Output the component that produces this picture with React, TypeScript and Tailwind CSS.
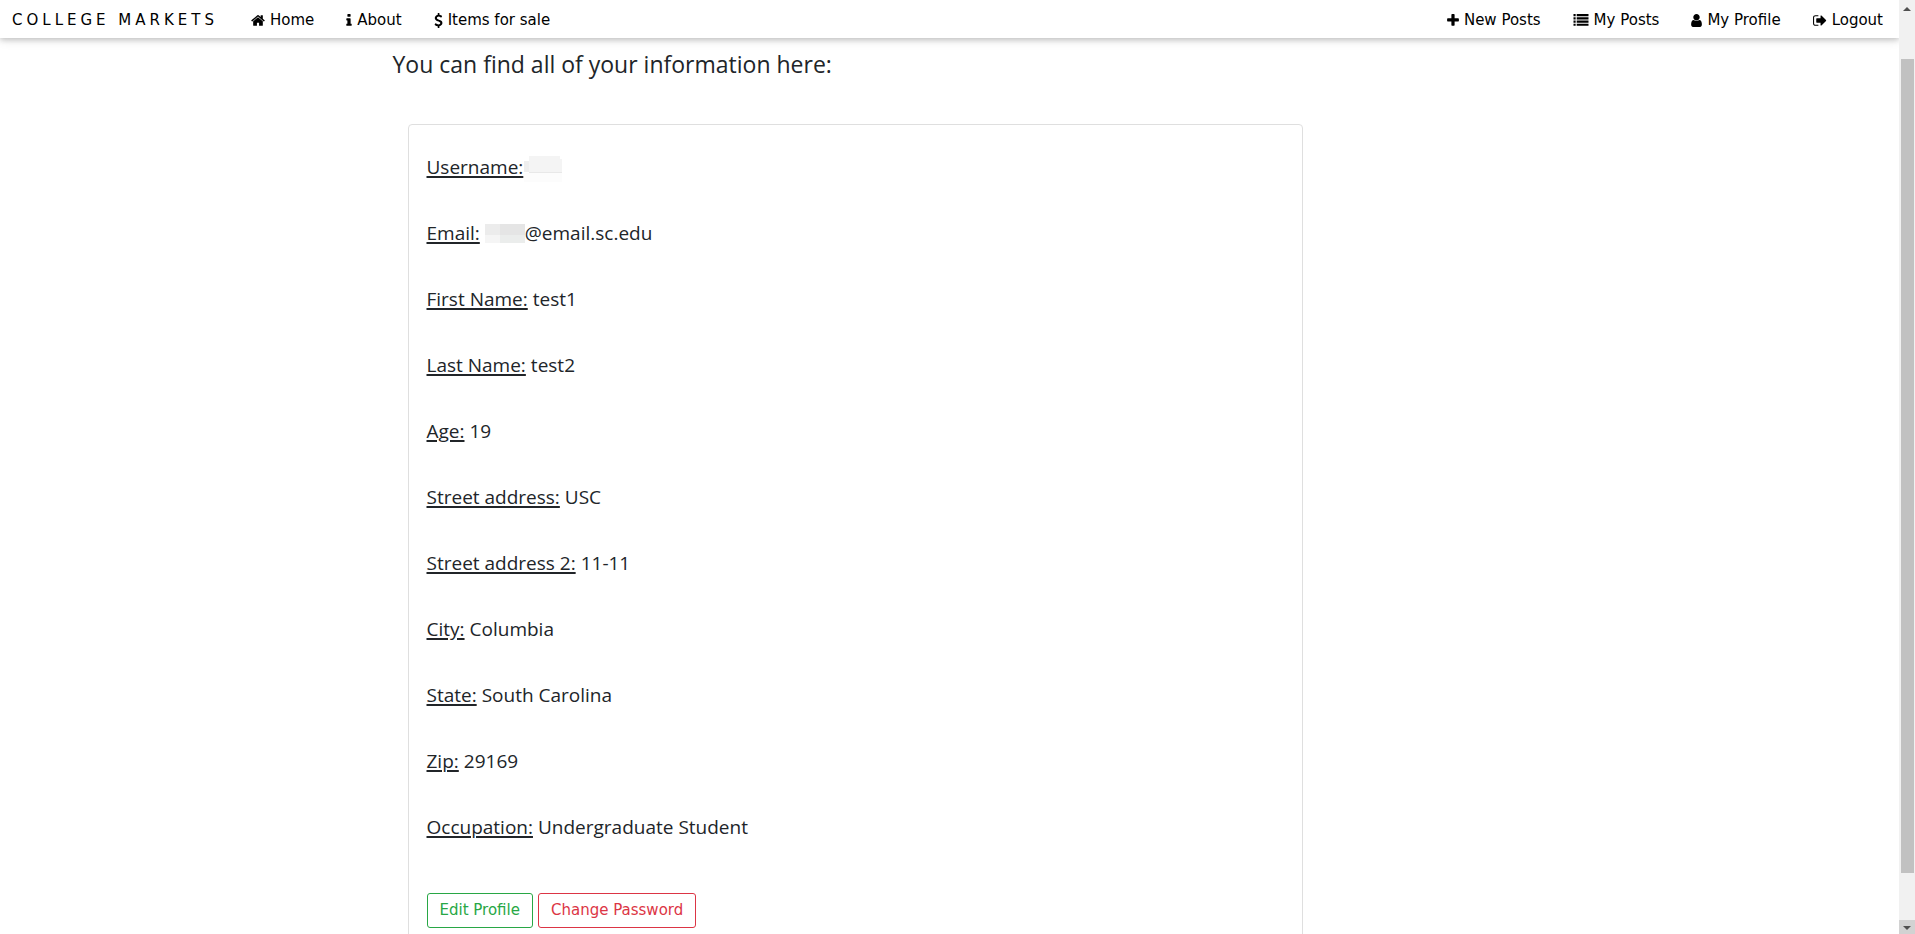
import React from "react";

type IconName = "home" | "info" | "dollar" | "plus" | "list" | "user" | "signOut";

const ICONS: Record<IconName, { viewBox: string; size: string; path: string }> = {
  home: {
    viewBox: "64 0 1664 1792",
    size: "w-[14px]",
    path: "M1472 992v480q0 26-19 45t-45 19h-384v-384h-256v384h-384q-26 0-45-19t-19-45v-480q0-1 .5-3t.5-3l575-474 575 474q1 2 1 6zm223-69l-62 74q-8 9-21 11h-3q-13 0-21-7l-692-577-692 577q-12 8-24 7-13-2-21-11l-62-74q-8-10-7-23.5t11-21.5l719-599q32-26 76-26t76 26l244 204v-195q0-14 9-23t23-9h192q14 0 23 9t9 23v408l219 182q10 8 11 21.5t-7 23.5z",
  },
  info: {
    viewBox: "576 0 640 1792",
    size: "w-[6px]",
    path: "M1216 1344v128q0 26-19 45t-45 19h-512q-26 0-45-19t-19-45v-128q0-26 19-45t45-19h64v-384h-64q-26 0-45-19t-19-45v-128q0-26 19-45t45-19h384q26 0 45 19t19 45v576h64q26 0 45 19t19 45zm-128-1152v192q0 26-19 45t-45 19h-256q-26 0-45-19t-19-45v-192q0-26 19-45t45-19h256q26 0 45 19t19 45z",
  },
  dollar: {
    viewBox: "384 0 1024 1792",
    size: "w-[9px]",
    path: "M1362 1185q0 153-99.5 263.5t-258.5 136.5v175q0 14-9 23t-23 9h-135q-13 0-22.5-9.5t-9.5-22.5v-175q-66-9-127.5-31t-101.5-44.5-74-48-46.5-37.5-17.5-18q-17-21-2-41l103-135q7-10 23-12 15-2 24 9l2 2q113 99 243 125 37 8 74 8 81 0 142.5-43t61.5-122q0-28-15-53t-33.5-42-58.5-37.5-66-32-80-32.5q-39-16-61.5-25t-61.5-26.5-62.5-31-56.5-35.5-53.5-42.5-43.5-49-35.5-58-21-66.5-8.5-78q0-138 98-242t255-134v-180q0-13 9.5-22.5t22.5-9.5h135q14 0 23 9t9 23v176q57 6 110.5 23t87 33.5 63.5 37.5 39 29 15 14q17 18 5 38l-81 146q-8 15-23 16-14 3-27-7-3-3-14.5-12t-39-26.5-58.5-32-74.5-26-85.5-11.5q-95 0-155 43t-60 111q0 26 8.5 48t29.5 41.5 39.5 33 56 31 60.5 27 70 27.5q53 20 81 31.5t76 35 75.5 42.5 62 50 53 63.5 31.5 76.5 13 94z",
  },
  plus: {
    viewBox: "192 0 1408 1792",
    size: "w-[12px]",
    path: "M1600 736v192q0 40-28 68t-68 28h-416v416q0 40-28 68t-68 28h-192q-40 0-68-28t-28-68v-416h-416q-40 0-68-28t-28-68v-192q0-40 28-68t68-28h416v-416q0-40 28-68t68-28h192q40 0 68 28t28 68v416h416q40 0 68 28t28 68z",
  },
  list: {
    viewBox: "0 0 1792 1792",
    size: "w-[16px]",
    path: "M0 128h256v256H0zM384 128h1408v256H384zM0 512h256v256H0zM384 512h1408v256H384zM0 896h256v256H0zM384 896h1408v256H384zM0 1280h256v256H0zM384 1280h1408v256H384z",
  },
  user: {
    viewBox: "256 0 1280 1792",
    size: "w-[11px]",
    path: "M1536 1399q0 109-62.5 187t-150.5 78h-854q-88 0-150.5-78t-62.5-187q0-85 8.5-160.5t31.5-152 58.5-131 94-89 134.5-34.5q131 128 313 128t313-128q76 0 134.5 34.5t94 89 58.5 131 31.5 152 8.5 160.5zm-256-887q0 159-112.5 271.5t-271.5 112.5-271.5-112.5-112.5-271.5 112.5-271.5 271.5-112.5 271.5 112.5 112.5 271.5z",
  },
  signOut: {
    viewBox: "96 0 1600 1792",
    size: "w-[14px]",
    path: "M704 1440q0 4 1 20t.5 26.5-3 23.5-10 19.5-20.5 6.5h-320q-119 0-203.5-84.5t-84.5-203.5v-704q0-119 84.5-203.5t203.5-84.5h320q13 0 22.5 9.5t9.5 22.5q0 4 1 20t.5 26.5-3 23.5-10 19.5-20.5 6.5h-320q-66 0-113 47t-47 113v704q0 66 47 113t113 47h312l11.5 1 11.5 3 8 5.5 7 9 2 13.5zm928-544q0 26-19 45l-544 544q-19 19-45 19t-45-19-19-45v-288h-448q-26 0-45-19t-19-45v-384q0-26 19-45t45-19h448v-288q0-26 19-45t45-19 45 19l544 544q19 19 19 45z",
  },
};

function Icon({ name }: { name: IconName }) {
  const icon = ICONS[name];
  return (
    <svg viewBox={icon.viewBox} className={`h-[15px] shrink-0 ${icon.size}`} fill="currentColor" aria-hidden="true">
      <path d={icon.path} />
    </svg>
  );
}

function NavLink({ icon, label }: { icon: IconName; label: string }) {
  return (
    <a href="#" className="flex items-center gap-[5px] px-4">
      <Icon name={icon} />
      {label}
    </a>
  );
}

const FIELDS: { label: string; value: React.ReactNode }[] = [
  { label: "Username:", value: <UsernameMask /> },
  {
    label: "Email:",
    value: (
      <>
        <EmailMask />
        @email.sc.edu
      </>
    ),
  },
  { label: "First Name:", value: "test1" },
  { label: "Last Name:", value: "test2" },
  { label: "Age:", value: "19" },
  { label: "Street address:", value: "USC" },
  { label: "Street address 2:", value: "11-11" },
  { label: "City:", value: "Columbia" },
  { label: "State:", value: "South Carolina" },
  { label: "Zip:", value: "29169" },
  { label: "Occupation:", value: "Undergraduate Student" },
];

function UsernameMask() {
  return (
    <svg viewBox="0 0 38 30" className="-ml-1 h-[30px] w-[38px]" aria-hidden="true">
      <path d="M0 9h5v11H0z" fill="#eeeeee" />
      <path d="M5 4h31v3h2v13H5z" fill="#f4f4f4" />
      <path d="M5 20h33v1H5z" fill="#e8e8e8" />
      <path d="M0 21h38v9H0z" fill="#fcfcfc" />
    </svg>
  );
}

function EmailMask() {
  return (
    <svg viewBox="0 0 40 19" className="h-[19px] w-[40px]" aria-hidden="true">
      <path d="M0 0h15v11H0z" fill="#ececec" />
      <path d="M15 0h25v11H15z" fill="#e5e5e5" />
      <path d="M0 11h15v8H0z" fill="#f5f5f5" />
      <path d="M15 11h25v8H15z" fill="#ebedec" />
    </svg>
  );
}

function Scrollbar() {
  return (
    <div className="flex w-4 shrink-0 flex-col bg-[#f1f1f1]" aria-hidden="true">
      <svg viewBox="0 0 16 17" className="h-[17px] w-4 shrink-0">
        <path d="M8 7l4 4H4z" fill="#505050" />
      </svg>
      <div className="flex min-h-0 flex-1 flex-col pt-[42px] pr-px pb-[47px] pl-0.5">
        <div className="grow bg-[#c1c1c1]" />
      </div>
      <svg viewBox="0 0 16 14" className="h-[14px] w-4 shrink-0 bg-[#d2d2d2]">
        <path d="M8 10l4-4H4z" fill="#505050" />
      </svg>
    </div>
  );
}

export default function App() {
  return (
    <div className="flex h-screen overflow-hidden bg-white font-['Open_Sans','Noto_Sans',sans-serif] text-[#212529]">
      <div className="flex min-w-0 flex-1 flex-col overflow-hidden">
        <nav className="relative z-10 flex h-[38px] shrink-0 items-center justify-between bg-white pt-0.5 font-['DejaVu_Sans',sans-serif] text-[15px] text-black shadow-[0_2px_5px_0_rgba(0,0,0,0.16),0_2px_10px_0_rgba(0,0,0,0.12)]">
          <div className="flex items-center">
            <a href="#" className="pr-[17px] pl-3 tracking-[4px]">
              COLLEGE MARKETS
            </a>
            <NavLink icon="home" label="Home" />
            <NavLink icon="info" label="About" />
            <NavLink icon="dollar" label="Items for sale" />
          </div>
          <div className="flex items-center">
            <NavLink icon="plus" label="New Posts" />
            <NavLink icon="list" label="My Posts" />
            <NavLink icon="user" label="My Profile" />
            <NavLink icon="signOut" label="Logout" />
          </div>
        </nav>

        <main className="mx-auto w-full max-w-[1140px] px-[13px]">
          <h1 className="pt-3 text-[23px] leading-[28px]">You can find all of your information here:</h1>
          <section className="mt-[46px] ml-[15px] max-w-[895px] rounded border border-[#dfdfdf] px-[18px] pt-[30px] pb-10">
            <dl className="flex flex-col gap-[42px] text-[19px] leading-[24px]">
              {FIELDS.map((field) => (
                <div key={field.label} className="flex h-6 items-center gap-[5px]">
                  <dt className="underline decoration-2 underline-offset-2">{field.label}</dt>
                  <dd className="flex items-center">{field.value}</dd>
                </div>
              ))}
            </dl>
            <div className="mt-[54px] flex gap-[5px] font-['DejaVu_Sans',sans-serif] text-[15px]">
              <button type="button" className="h-[35px] rounded-[3px] border border-[#28a745] px-3 text-[#28a745]">
                Edit Profile
              </button>
              <button type="button" className="h-[35px] rounded-[3px] border border-[#dc3545] px-3 text-[#dc3545]">
                Change Password
              </button>
            </div>
          </section>
        </main>
      </div>
      <Scrollbar />
    </div>
  );
}
